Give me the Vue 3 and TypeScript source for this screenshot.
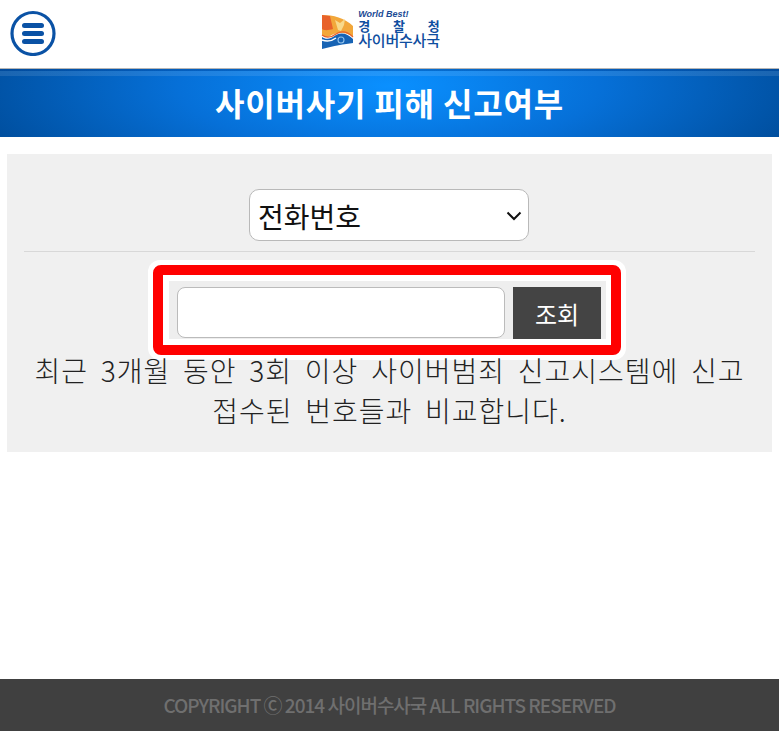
<script setup lang="ts">
import { ref } from 'vue'
const kind = ref('전화번호')
const kinds: string[] = ['전화번호', '계좌번호']
const query = ref('')
</script>

<template>
  <div class="page">
    <header class="top">
      <button class="menu" aria-label="메뉴">
        <svg width="46" height="46" viewBox="0 0 46 46">
          <circle cx="23" cy="23.5" r="21" fill="#fff" stroke="#0a52a5" stroke-width="3.2" />
          <rect x="12" y="13" width="22" height="5" rx="2.5" fill="#0a52a5" />
          <rect x="12" y="21" width="22" height="5" rx="2.5" fill="#0a52a5" />
          <rect x="12" y="29" width="22" height="5" rx="2.5" fill="#0a52a5" />
        </svg>
      </button>
      <div class="logo">
        <svg class="mark" width="33" height="35" viewBox="0 0 33 35">
          <path d="M1 0 C12 0 24 3 32 11 L32 22 C24 16 15 17 9 21 C6 23 3 22 1 20 Z" fill="#f2a73a" />
          <path d="M1 0 L9 1 L12 14 C8 15 4 16 1 14 Z" fill="#e8622a" />
          <path d="M14 5 L19 8 L24 4 L23 10 L20 16 L17 15 Z" fill="#f8d98a" />
          <path d="M1 22 C5 25 10 24 15 20 C21 17 27 19 32 24 L32 28 C24 29 12 31 1 34 Z" fill="#1763b4" />
          <path d="M1 20 C6 24 11 22 15 19 C21 15 27 17 32 22" fill="none" stroke="#e8622a" stroke-width="1.2" />
          <path d="M1 25 C6 27 11 26 15 23" fill="none" stroke="#fff" stroke-width="1.5" />
          <circle cx="20" cy="25" r="3" fill="none" stroke="#8fc0ea" stroke-width="1.1" />
        </svg>
        <div class="logo-text">
          <span class="best">World Best!</span>
          <span class="agency"><b>경</b><b>찰</b><b>청</b></span>
          <span class="unit">사이버수사국</span>
        </div>
      </div>
    </header>

    <h1 class="title">사이버사기 피해 신고여부</h1>

    <main class="panel">
      <div class="kind-row">
        <select v-model="kind" class="kind">
          <option v-for="k in kinds" :key="k" :value="k">{{ k }}</option>
        </select>
        <svg class="chev" width="16" height="10" viewBox="0 0 16 10">
          <path d="M1.5 1.5 L8 8 L14.5 1.5" fill="none" stroke="#111" stroke-width="2" />
        </svg>
      </div>
      <hr class="rule" />
      <div class="ring">
        <div class="red">
          <form class="search" @submit.prevent>
            <input v-model="query" class="field" type="text" />
            <button class="go" type="submit">조회</button>
          </form>
        </div>
      </div>
      <p class="note">최근 3개월 동안 3회 이상 사이버범죄 신고시스템에 신고<br />접수된 번호들과 비교합니다.</p>
    </main>

    <footer class="foot">COPYRIGHT Ⓒ 2014 사이버수사국 ALL RIGHTS RESERVED</footer>
  </div>
</template>

<style>
html, body { margin: 0; background: #fff; }
</style>

<style scoped>
.page {
  height: 739px;
  display: flex;
  flex-direction: column;
  font-family: "Noto Sans CJK KR", "Noto Sans", sans-serif;
  background: #fff;
}
.top {
  height: 68px;
  flex: none;
  position: relative;
  display: flex;
  justify-content: center;
  align-items: center;
  border-bottom: 1px solid #b5b5b5;
  box-sizing: content-box;
}
.menu {
  position: absolute;
  left: 10px;
  top: 10px;
  padding: 0;
  border: 0;
  background: none;
  line-height: 0;
}
.logo {
  display: flex;
  align-items: flex-end;
  gap: 4px;
  margin-top: -12px;
  margin-right: 18px;
}
.mark { display: block; margin-bottom: -3px; }
.logo-text { display: flex; flex-direction: column; color: #0f4ea0; }
.best {
  font: italic bold 9px/9px "Liberation Sans", sans-serif;
  color: #1a4a94;
}
.agency {
  display: flex;
  justify-content: space-between;
  font-size: 13px;
  line-height: 13px;
}
.agency b { font-weight: 700; }
.unit { font-size: 15px; line-height: 15px; font-weight: 500; letter-spacing: -0.2px; white-space: nowrap; }
.title {
  height: 68px;
  flex: none;
  margin: 0;
  color: #fff;
  font-size: 32px;
  font-weight: 700;
  letter-spacing: 0.8px;
  line-height: 66px;
  text-align: center;
  background:
    linear-gradient(to bottom, rgba(0, 60, 140, .35) 0, rgba(0, 60, 140, .35) 2px, rgba(255, 255, 255, .1) 2px, rgba(255, 255, 255, .1) 7px, transparent 7px),
    radial-gradient(ellipse 420px 130px at 50% 25%, #0a90ff 0%, #0670d8 50%, #004f9f 100%);
}
.panel {
  margin: 17px 7px 0;
  height: 298px;
  flex: none;
  background: #f0f0f0;
  padding: 35px 17px 0;
  box-sizing: border-box;
  display: flex;
  flex-direction: column;
  align-items: center;
}
.kind-row {
  position: relative;
  display: flex;
  justify-content: center;
  margin-right: 1px;
}
.kind {
  width: 280px;
  height: 52px;
  border: 1px solid #b9b9b9;
  border-radius: 10px;
  background: #fff;
  color: #111;
  font-family: inherit;
  font-size: 28px;
  font-weight: 400;
  padding: 2px 8px 0;
  box-sizing: border-box;
  appearance: none;
}
.chev {
  position: absolute;
  right: 7px;
  top: 22px;
  pointer-events: none;
}
.rule {
  align-self: stretch;
  margin: 10px 0 8px;
  border: 0;
  border-top: 1px solid #d8d8d8;
}
.ring {
  background: #fff;
  border-radius: 12px;
  padding: 5px;
  margin-left: -5px;
}
.red {
  border: 10px solid #f00;
  border-radius: 8px;
  background: #fff;
  padding: 6px 5px 6px 6px;
}
.search {
  display: flex;
  gap: 8px;
  padding: 6px 5px 0 8px;
  background: #eee;
}
.field {
  width: 328px;
  height: 51px;
  margin-bottom: 1px;
  box-sizing: border-box;
  border: 1px solid #bbb;
  border-radius: 8px;
  background: #fff;
}
.go {
  width: 88px;
  height: 52px;
  border: 0;
  background: #444;
  color: #fff;
  font-family: inherit;
  font-size: 24px;
  font-weight: 400;
  padding: 0;
}
.note {
  margin: -10px 0 0;
  text-align: center;
  color: #222;
  font-size: 28px;
  font-weight: 300;
  letter-spacing: 1px;
  word-spacing: 5.6px;
  line-height: 40px;
  white-space: nowrap;
}
.foot {
  margin-top: 227px;
  height: 52px;
  flex: none;
  background: #404040;
  color: #6f6f6f;
  font-size: 19px;
  font-weight: 500;
  line-height: 52px;
  letter-spacing: -1px;
  text-align: center;
}
</style>
